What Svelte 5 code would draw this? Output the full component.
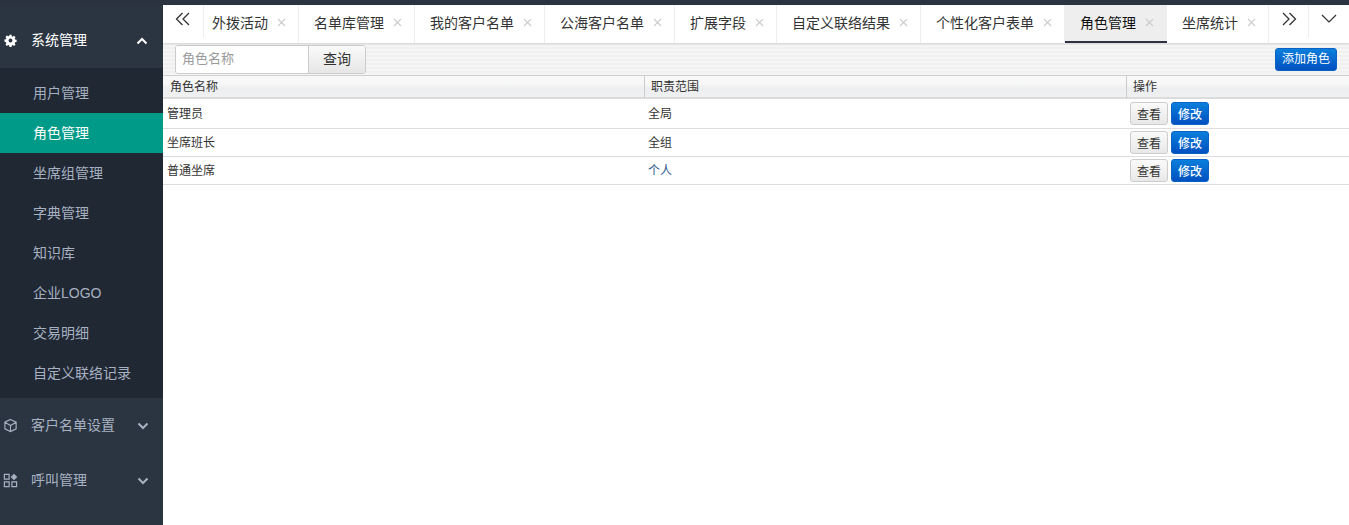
<script>
    const subMenu = ['用户管理', '角色管理', '坐席组管理', '字典管理', '知识库', '企业LOGO', '交易明细', '自定义联络记录'];
    const tabs = [
        { name: '外拨活动', w: 95, first: true },
        { name: '名单库管理', w: 116 },
        { name: '我的客户名单', w: 130 },
        { name: '公海客户名单', w: 130 },
        { name: '扩展字段', w: 102 },
        { name: '自定义联络结果', w: 144 },
        { name: '个性化客户表单', w: 144 },
        { name: '角色管理', w: 102, active: true },
        { name: '坐席统计', w: 102 }
    ];
    const roles = [
        { name: '管理员', scope: '全局', h: 30 },
        { name: '坐席班长', scope: '全组', h: 28 },
        { name: '普通坐席', scope: '个人', h: 28, blue: true }
    ];
</script>

<div class="page">
    <aside class="side">
        <div class="group open">
            <svg class="ico gear" viewBox="0 0 16 16" width="13" height="13">
                <path fill="#fff" fill-rule="evenodd" d="M6.700 1h2.600l.3 1.900 1.200.5 1.600-1.100 1.800 1.800-1.100 1.600.5 1.200 1.900.3v2.600l-1.900.3-.5 1.200 1.100 1.600-1.800 1.800-1.600-1.100-1.200.5-.3 1.900H6.700l-.3-1.900-1.200-.5-1.600 1.100-1.800-1.800 1.100-1.600-.5-1.200L.5 9.300V6.700l1.900-.3.5-1.200-1.100-1.600 1.800-1.800 1.600 1.100 1.200-.5zM8 5.600a2.400 2.400 0 1 0 0 4.800 2.400 2.400 0 0 0 0-4.800z"/>
            </svg>
            <span class="label">系统管理</span>
            <svg class="arrow" viewBox="0 0 12 8" width="12" height="8"><path d="M1.500 6.500 6 2l4.500 4.500" fill="none" stroke="#fff" stroke-width="2"/></svg>
        </div>
        <ul class="sub">
            {#each subMenu as item}
                <li class:on={item === '角色管理'}>{item}</li>
            {/each}
        </ul>
        <div class="group">
            <svg class="ico" viewBox="0 0 16 16" width="15" height="15">
                <path fill="none" stroke="#a7b1c2" stroke-width="1.200" d="M8 1.500 14 4.500v7L8 14.500 2 11.500v-7zM2 4.500 8 8l6-3.500M8 8v6.500"/>
            </svg>
            <span class="label">客户名单设置</span>
            <svg class="arrow" viewBox="0 0 12 8" width="12" height="8"><path d="M1.500 1.500 6 6l4.500-4.500" fill="none" stroke="#a7b1c2" stroke-width="2"/></svg>
        </div>
        <div class="group">
            <svg class="ico" viewBox="0 0 16 16" width="15" height="15">
                <path fill="none" stroke="#a7b1c2" stroke-width="1.300" d="M1.500 1.500h5v5h-5zM1.500 9.500h5v5h-5zM9.500 9.500h5v5h-5z"/>
                <path fill="#a7b1c2" d="M11.700 .8 15.200 4.300 11.700 7.800 8.200 4.300z"/>
            </svg>
            <span class="label">呼叫管理</span>
            <svg class="arrow" viewBox="0 0 12 8" width="12" height="8"><path d="M1.500 1.500 6 6l4.500-4.500" fill="none" stroke="#a7b1c2" stroke-width="2"/></svg>
        </div>
    </aside>

    <main class="content">
        <nav class="tabs">
            <button class="nav-btn first" aria-label="向左">
                <svg viewBox="0 0 16 14" width="16" height="14"><path d="M7.500 1 1.500 7l6 6M14 1 8 7l6 6" fill="none" stroke="#333" stroke-width="1.300"/></svg>
            </button>
            {#each tabs as tab}
                <div class="tab" class:active={tab.active} class:first={tab.first} style="width: {tab.w}px">
                    <span>{tab.name}</span>
                    <svg class="close" viewBox="0 0 9 9" width="9" height="9"><path d="M1 1l7 7M8 1 1 8" stroke="#ccc" stroke-width="1.100" fill="none"/></svg>
                </div>
            {/each}
            <button class="nav-btn" aria-label="向右">
                <svg viewBox="0 0 16 14" width="16" height="14"><path d="M2 1l6 6-6 6M8.500 1l6 6-6 6" fill="none" stroke="#333" stroke-width="1.300"/></svg>
            </button>
            <button class="nav-btn last" aria-label="更多">
                <svg viewBox="0 0 16 9" width="16" height="9"><path d="M1 1l7 7 7-7" fill="none" stroke="#333" stroke-width="1.200"/></svg>
            </button>
        </nav>

        <div class="toolbar">
            <div class="search">
                <input placeholder="角色名称" />
                <button>查询</button>
            </div>
            <button class="blue add">添加角色</button>
        </div>

        <div class="grid head">
            <div class="th">角色名称</div>
            <div class="th">职责范围</div>
            <div class="th">操作</div>
        </div>
        {#each roles as r}
            <div class="grid row" style="height: {r.h}px">
                <div class="td">{r.name}</div>
                <div class="td" class:scope-blue={r.blue}>{r.scope}</div>
                <div class="td ops">
                    <button class="gray small">查看</button>
                    <button class="blue small">修改</button>
                </div>
            </div>
        {/each}
    </main>
</div>

<style>
    :global(body) {
        margin: 0;
        background: #fff;
    }

    .page {
        display: flex;
        height: 525px;
        overflow: hidden;
        font-family: "Liberation Sans", "Noto Sans CJK SC", sans-serif;
        color: #333;
        border-top: 5px solid #2a333f;
        box-sizing: border-box;
    }

    .side {
        width: 163px;
        flex: none;
        background: #2b3541;
        margin-top: -5px;
        padding-top: 13px;
        box-sizing: border-box;
        height: 525px;
    }

    .group {
        height: 55px;
        display: flex;
        align-items: center;
        padding-left: 3px;
        color: #a7b1c2;
        font-size: 14px;
    }

    .group.open {
        color: #fff;
    }

    .ico {
        flex: none;
    }

    .gear {
        margin-left: 1px;
    }

    .label {
        margin-left: 13px;
        width: 106px;
        padding-bottom: 3px;
    }

    .group.open .label {
        margin-left: 14px;
        width: 105px;
    }

    .arrow {
        flex: none;
    }

    .sub {
        list-style: none;
        margin: 0;
        padding: 5px 0;
        background: #202833;
    }

    .sub li {
        height: 40px;
        line-height: 40px;
        padding-left: 33px;
        font-size: 14px;
        color: #a7b1c2;
    }

    .sub li.on {
        background: #009a88;
        color: #fff;
    }

    .content {
        flex: 1;
        min-width: 0;
    }

    .tabs {
        display: flex;
        height: 38px;
        box-shadow: 0 1px 2px rgba(0, 0, 0, 0.12);
        position: relative;
    }

    .nav-btn {
        border: 0;
        background: #fff;
        padding: 0 0 6px;
        width: 40px;
        height: 33px;
        flex: none;
        border-right: 1px solid #eee;
        display: flex;
        align-items: center;
        justify-content: center;
    }

    .nav-btn.first {
        width: 41px;
    }

    .nav-btn.last {
        border-right: 0;
        flex: 1;
    }

    .tab {
        flex: none;
        box-sizing: border-box;
        display: flex;
        align-items: center;
        gap: 9px;
        padding: 0 0 4px 15px;
        font-size: 14px;
        color: #333;
        border-right: 1px solid #eee;
        white-space: nowrap;
    }

    .tab.first {
        padding-left: 8px;
    }

    .tab.active {
        background: #eee;
        color: #111;
        border-right: 0;
        padding-bottom: 2px;
        border-bottom: 2px solid #2a333f;
    }

    .toolbar {
        height: 32px;
        box-sizing: border-box;
        display: flex;
        justify-content: space-between;
        align-items: center;
        padding: 1px 12px;
        background: repeating-linear-gradient(#f0f0f0 0 2px, #f5f5f5 2px 4px);
    }

    .search {
        display: flex;
        height: 29px;
        border: 1px solid #ccc;
        border-radius: 3px;
        box-sizing: border-box;
        overflow: hidden;
    }

    .search input {
        width: 132px;
        box-sizing: border-box;
        border: 0;
        padding: 0 6px 2px;
        font: 13px "Liberation Sans", "Noto Sans CJK SC", sans-serif;
        background: #fff;
        outline: none;
    }

    .search input::placeholder {
        color: #999;
    }

    .search button {
        width: 57px;
        border: 0;
        border-left: 1px solid #ccc;
        background: linear-gradient(#fafafa, #e6e6e6);
        font: 14px "Liberation Sans", "Noto Sans CJK SC", sans-serif;
        color: #333;
        padding: 0 0 3px;
    }

    .blue {
        background: linear-gradient(#0a7fdc, #0050c0);
        border: 1px solid #0a62c4;
        border-radius: 3px;
        color: #fff;
        font: 12px "Liberation Sans", "Noto Sans CJK SC", sans-serif;
        padding: 0 0 3px;
    }

    .add {
        width: 62px;
        height: 23px;
    }

    .grid {
        display: grid;
        grid-template-columns: 482px 482px 1fr;
        box-sizing: border-box;
    }

    .head {
        height: 24px;
        border-top: 1px solid #d0d0d0;
        border-bottom: 2px solid #dcdcdc;
        background: linear-gradient(#f8f8f8 0 35%, #eceef0 60%, #eef0f2);
    }

    .th {
        font-size: 12px;
        line-height: 22px;
        padding-left: 6px;
        color: #333;
        border-right: 1px solid #ccc;
    }

    .th:first-child {
        padding-left: 7px;
    }

    .th:last-child {
        border-right: 0;
    }

    .row {
        border-bottom: 1px solid #ddd;
        align-items: center;
    }

    .td {
        font-size: 12px;
        padding: 0 0 3px 3px;
        color: #333;
    }

    .td:first-child {
        padding-left: 4px;
    }

    .scope-blue {
        color: #2a5a8c;
    }

    .ops {
        display: flex;
        gap: 3px;
        padding: 0 0 0 3px;
    }

    .small {
        width: 38px;
        height: 23px;
        font: 12px "Liberation Sans", "Noto Sans CJK SC", sans-serif;
        padding: 0 0 1px;
        border-radius: 3px;
    }

    .blue.small {
        font-weight: 500;
    }

    .gray {
        background: linear-gradient(#fafafa, #e8e8e8);
        border: 1px solid #ccc;
        color: #333;
    }
</style>
